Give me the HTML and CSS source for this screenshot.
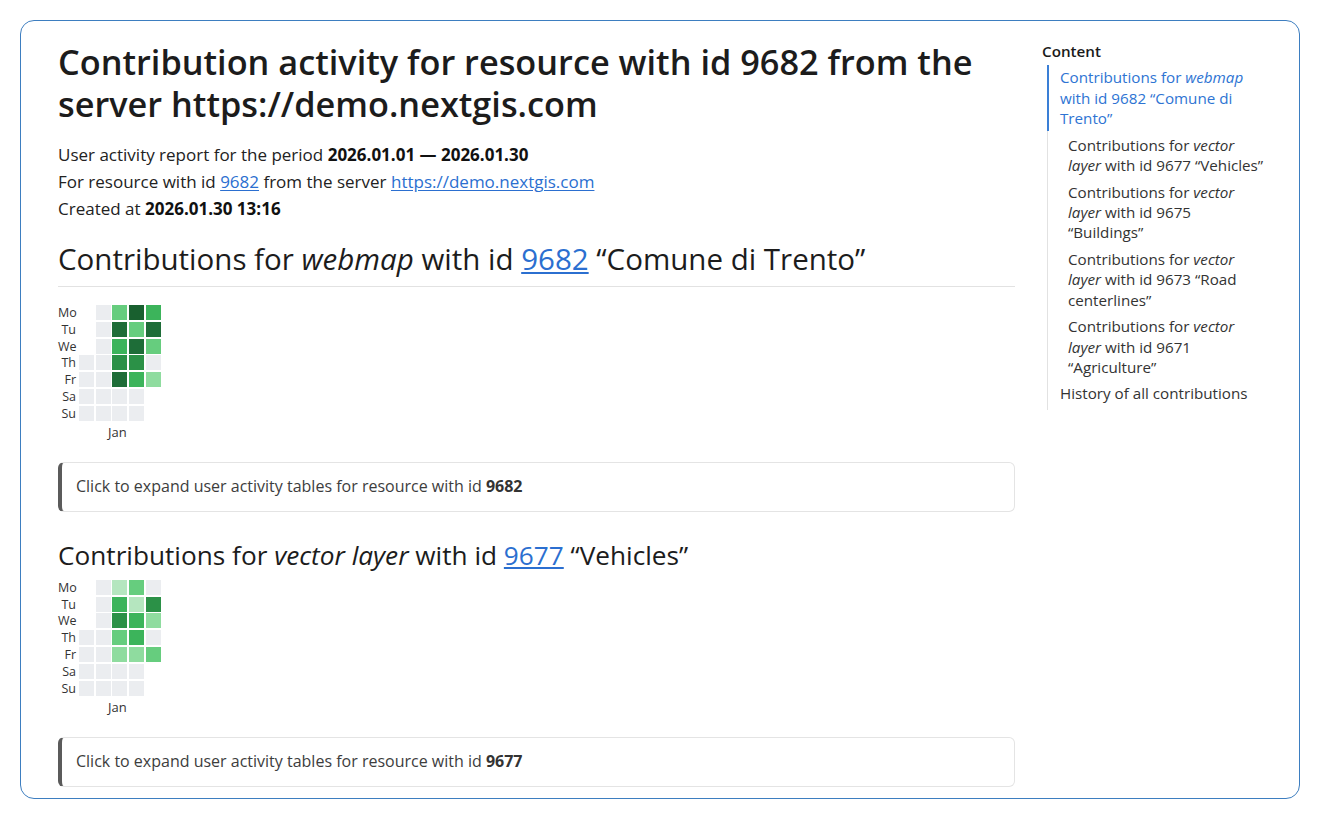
FILE: index.html
```html
<!DOCTYPE html>
<html lang="en">
<head>
<meta charset="utf-8">
<title>Contribution activity</title>
<link rel="stylesheet" href="styles.css">
</head>
<body>
<div class="frame">
  <main class="main">
    <h1 class="title">Contribution activity for resource with id 9682 from the server https://demo.nextgis.com</h1>
    <p class="meta">
      <span class="meta-line">User activity report for the period <b>2026.01.01 — 2026.01.30</b></span>
      <span class="meta-line">For resource with id <a href="#">9682</a> from the server <a href="#">https://demo.nextgis.com</a></span>
      <span class="meta-line">Created at <b>2026.01.30 13:16</b></span>
    </p>

    <section class="section">
      <h2 class="sec-title sec-title-main">Contributions for <i>webmap</i> with id <a href="#">9682</a> “Comune di Trento”</h2>
      <div class="heatmap">
        <div class="grid">
          <span class="lbl">Mo</span><span class="lbl">Tu</span><span class="lbl">We</span><span class="lbl">Th</span><span class="lbl">Fr</span><span class="lbl">Sa</span><span class="lbl">Su</span>
          <span class="nc"></span><span class="nc"></span><span class="nc"></span><span class="c"></span><span class="c"></span><span class="c"></span><span class="c"></span>
          <span class="c"></span><span class="c"></span><span class="c"></span><span class="c"></span><span class="c"></span><span class="c"></span><span class="c"></span>
          <span class="c l2"></span><span class="c l5"></span><span class="c l3"></span><span class="c l4"></span><span class="c l5"></span><span class="c"></span><span class="c"></span>
          <span class="c l6"></span><span class="c l2"></span><span class="c l5"></span><span class="c l4"></span><span class="c l3"></span><span class="c"></span><span class="c"></span>
          <span class="c l3"></span><span class="c l5"></span><span class="c l2"></span><span class="c"></span><span class="c l1"></span><span class="nc"></span><span class="nc"></span>
        </div>
        <div class="month">Jan</div>
      </div>
      <details class="expand">
        <summary>Click to expand user activity tables for resource with id <b>9682</b></summary>
      </details>
    </section>

    <section class="section section-sub">
      <h3 class="sec-title sec-title-sub">Contributions for <i>vector layer</i> with id <a href="#">9677</a> “Vehicles”</h3>
      <div class="heatmap">
        <div class="grid">
          <span class="lbl">Mo</span><span class="lbl">Tu</span><span class="lbl">We</span><span class="lbl">Th</span><span class="lbl">Fr</span><span class="lbl">Sa</span><span class="lbl">Su</span>
          <span class="nc"></span><span class="nc"></span><span class="nc"></span><span class="c"></span><span class="c"></span><span class="c"></span><span class="c"></span>
          <span class="c"></span><span class="c"></span><span class="c"></span><span class="c"></span><span class="c"></span><span class="c"></span><span class="c"></span>
          <span class="c l0"></span><span class="c l3"></span><span class="c l4"></span><span class="c l2"></span><span class="c l1"></span><span class="c"></span><span class="c"></span>
          <span class="c l2"></span><span class="c l0"></span><span class="c l3"></span><span class="c l3"></span><span class="c l1"></span><span class="c"></span><span class="c"></span>
          <span class="c"></span><span class="c l4"></span><span class="c l1"></span><span class="c"></span><span class="c l2"></span><span class="nc"></span><span class="nc"></span>
        </div>
        <div class="month">Jan</div>
      </div>
      <details class="expand">
        <summary>Click to expand user activity tables for resource with id <b>9677</b></summary>
      </details>
    </section>
  </main>

  <aside class="toc">
    <div class="toc-head">Content</div>
    <ul class="toc-list">
      <li class="toc-item active">Contributions for <i>webmap</i> with id 9682 “Comune di Trento”</li>
      <li class="toc-item sub">Contributions for <i>vector layer</i> with id 9677 “Vehicles”</li>
      <li class="toc-item sub">Contributions for <i>vector layer</i> with id 9675 “Buildings”</li>
      <li class="toc-item sub">Contributions for <i>vector layer</i> with id 9673 “Road centerlines”</li>
      <li class="toc-item sub">Contributions for <i>vector layer</i> with id 9671 “Agriculture”</li>
      <li class="toc-item plain">History of all contributions</li>
    </ul>
  </aside>
</div>
</body>
</html>
```

FILE: styles.css
```css
* { box-sizing: border-box; }

html, body {
  margin: 0;
  padding: 0;
  background: #ffffff;
}

body {
  padding: 20px;
  font-family: "Open Sans", "Noto Sans", "Liberation Sans", sans-serif;
  color: #1f1f1f;
}

.frame {
  height: 779px;
  border: 1px solid #3d7ec0;
  border-radius: 14px;
  display: flex;
  gap: 27px;
  padding: 20px 0 0 37px;
  overflow: hidden;
}

.main {
  width: 957px;
  flex: none;
}

a {
  color: #2b6fd0;
  text-decoration: underline;
  text-underline-offset: 2px;
}

.title {
  margin: 0;
  font-size: 34.3px;
  line-height: 42px;
  font-weight: 600;
  color: #1c1c1c;
}

.meta {
  margin: 16px 0 0;
  font-size: 17px;
  line-height: 27px;
  color: #222;
}

.meta-line { display: block; }

.meta b { font-weight: 700; color: #111; }

.section { margin-top: 19px; }

.section-sub { margin-top: 27px; }

.sec-title {
  margin: 0;
  font-weight: 500;
  color: #1c1c1c;
}

.sec-title-main {
  font-size: 29.5px;
  line-height: 36px;
  padding-bottom: 9px;
  border-bottom: 1px solid #e2e2e2;
  margin-bottom: 18px;
}

.sec-title-sub {
  font-size: 26.2px;
  line-height: 32px;
  margin-bottom: 9px;
}

.heatmap { margin-bottom: 22px; }

.grid {
  display: grid;
  grid-auto-flow: column;
  grid-template-rows: repeat(7, 15px);
  grid-template-columns: 19px repeat(5, 15px);
  gap: 1.8px;
}

.lbl {
  font-size: 12.5px;
  line-height: 15px;
  text-align: right;
  color: #333;
  padding-right: 1px;
}

.c { background: #ebedf0; }
.c.l0 { background: #b5e6bf; }
.c.l1 { background: #8fdc9f; }
.c.l2 { background: #66cd7e; }
.c.l3 { background: #3cb45b; }
.c.l4 { background: #2b9147; }
.c.l5 { background: #1e6d38; }
.c.l6 { background: #19602f; }

.month {
  margin-top: 3px;
  padding-left: 50px;
  font-size: 13px;
  line-height: 16px;
  color: #333;
}

.expand {
  border: 1px solid #e4e4e4;
  border-left: 4px solid #5b5b5b;
  border-radius: 6px;
  margin-bottom: 27px;
}

.expand summary {
  list-style: none;
  padding: 12.5px 14px;
  font-size: 16px;
  line-height: 23px;
  font-weight: 500;
  color: #3d3d3d;
  cursor: pointer;
}

.expand summary::-webkit-details-marker { display: none; }

.expand summary b { font-weight: 700; color: #333; }

.toc {
  width: 227px;
  flex: none;
  font-size: 15.2px;
  line-height: 20.3px;
}

.toc-head {
  font-weight: 600;
  color: #1a1a1a;
  line-height: 20px;
}

.toc-list {
  list-style: none;
  margin: 4px 0 0 5px;
  padding: 0 0 6px;
  border-left: 1px solid #e2e2e2;
}

.toc-item {
  color: #333;
  padding: 0 0 6.3px 20px;
}

.toc-item.active {
  color: #2e74d3;
  line-height: 20.5px;
  border-left: 2px solid #3a7fd6;
  margin-left: -1px;
  padding: 2px 0 2.5px 11px;
  margin-bottom: 4px;
}

.toc-item.plain { padding-left: 12px; padding-bottom: 0; }
```
